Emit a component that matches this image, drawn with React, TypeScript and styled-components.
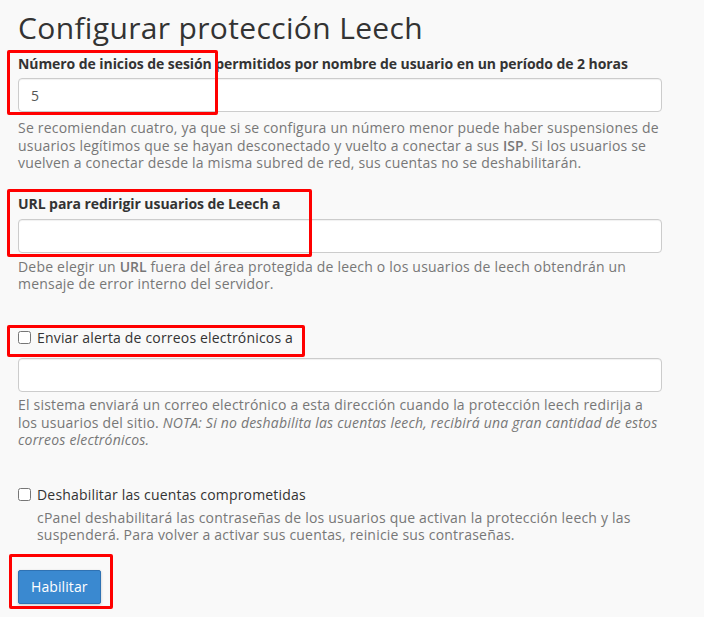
import { createGlobalStyle } from "styled-components";
import styled from "styled-components";

const GlobalStyle = createGlobalStyle`
  html, body {
    margin: 0;
    padding: 0;
    background: #f9f9f9;
  }
  body {
    font-family: "Open Sans", "Liberation Sans", sans-serif;
    font-size: 14px;
    color: #333;
  }
`;

// annotation boxes drawn over the form
const MARKS = [
  { left: 7, top: 50, width: 211, height: 65 },
  { left: 7, top: 189, width: 305, height: 68 },
  { left: 7, top: 325, width: 298, height: 32 },
  { left: 9, top: 554, width: 104, height: 55 },
];

const App = () => {
  return (
    <>
      <GlobalStyle />
      <StyledPage>
        <Title>Configurar protección Leech</Title>

        <FormGroup $top={8}>
          <Label>
            Número de inicios de sesión permitidos por nombre de usuario en un
            período de 2 horas
          </Label>
          <TextInput type="text" defaultValue="5" $top={4} />
          <HelpBlock $top={7}>
            Se recomiendan cuatro, ya que si se configura un número menor puede
            haber suspensiones de usuarios legítimos que se hayan desconectado y
            vuelto a conectar a sus <b>ISP</b>. Si los usuarios se vuelven a
            conectar desde la misma subred de red, sus cuentas no se
            deshabilitarán.
          </HelpBlock>
        </FormGroup>

        <FormGroup $top={22}>
          <Label>URL para redirigir usuarios de Leech a</Label>
          <TextInput type="text" />
          <HelpBlock>
            Debe elegir un <b>URL</b> fuera del área protegida de leech o los
            usuarios de leech obtendrán un mensaje de error interno del
            servidor.
          </HelpBlock>
        </FormGroup>

        <FormGroup $top={35}>
          <CheckRow>
            <CheckBox type="checkbox" />
            Enviar alerta de correos electrónicos a
          </CheckRow>
          <TextInput type="text" $top={10} />
          <HelpBlock $top={4}>
            El sistema enviará un correo electrónico a esta dirección cuando la
            protección leech redirija a los usuarios del sitio.{" "}
            <em>
              NOTA: Si no deshabilita las cuentas leech, recibirá una gran
              cantidad de estos correos electrónicos.
            </em>
          </HelpBlock>
        </FormGroup>

        <FormGroup $top={36}>
          <CheckRow>
            <CheckBox type="checkbox" />
            Deshabilitar las cuentas comprometidas
          </CheckRow>
          <HelpBlock $indent={19} $top={4}>
            cPanel deshabilitará las contraseñas de los usuarios que activan la
            protección leech y las suspenderá. Para volver a activar sus
            cuentas, reinicie sus contraseñas.
          </HelpBlock>
        </FormGroup>

        <ButtonRow>
          <PrimaryButton type="button">Habilitar</PrimaryButton>
        </ButtonRow>

        {MARKS.map((m, i) => (
          <Mark key={i} style={m} />
        ))}
      </StyledPage>
    </>
  );
};

export default App;

const StyledPage = styled.div`
  position: relative;
  width: 644px;
  min-height: 617px;
  padding: 10px 0 0 18px;
  box-sizing: content-box;
`;

const Title = styled.h1`
  margin: 0;
  font-size: 30px;
  line-height: 36px;
  font-weight: 400;
  color: #333;
  letter-spacing: 0.35px;
`;

const FormGroup = styled.div<{ $top?: number }>`
  display: flex;
  flex-direction: column;
  margin-top: ${(p) => p.$top ?? 7}px;
`;

const Label = styled.label`
  font-weight: 700;
  font-size: 14px;
  line-height: 20px;
  color: #333;
  letter-spacing: -0.07px;
`;

const TextInput = styled.input<{ $top?: number }>`
  box-sizing: border-box;
  width: 644px;
  height: 34px;
  margin-top: ${(p) => p.$top ?? 5}px;
  padding: 6px 12px;
  border: 1px solid #ccc;
  border-radius: 4px;
  background: #fff;
  font-family: "Open Sans", "Liberation Sans", sans-serif;
  font-size: 14px;
  color: #555;
  box-shadow: inset 0 1px 1px rgba(0, 0, 0, 0.06);
  outline: none;
`;

const HelpBlock = styled.p<{ $indent?: number; $top?: number }>`
  margin: ${(p) => p.$top ?? 5}px 0 0 ${(p) => p.$indent ?? 0}px;
  font-size: 14px;
  line-height: 17.6px;
  color: #777;
  letter-spacing: 0.2px;

  b {
    font-weight: 600;
    color: #777;
    letter-spacing: 0;
  }
`;

const CheckRow = styled.label`
  display: flex;
  align-items: center;
  font-size: 14px;
  line-height: 20px;
  color: #333;
  letter-spacing: 0.18px;
`;

const CheckBox = styled.input`
  width: 13px;
  height: 13px;
  margin: 0 6px 0 0;
`;

const ButtonRow = styled.div`
  margin-top: 26px;
`;

const PrimaryButton = styled.button`
  height: 34px;
  padding: 6px 12px;
  border: 1px solid #2f72b3;
  border-radius: 2px;
  background: #3a89d0;
  color: #fff;
  font-family: "Open Sans", "Liberation Sans", sans-serif;
  font-size: 14px;
  line-height: 20px;
  letter-spacing: 0.1px;
  box-shadow: 0 1px 3px rgba(0, 0, 0, 0.2);
  cursor: pointer;
`;

const Mark = styled.div`
  position: absolute;
  box-sizing: border-box;
  border: 3px solid #f00;
  border-radius: 2px;
  pointer-events: none;
`;
